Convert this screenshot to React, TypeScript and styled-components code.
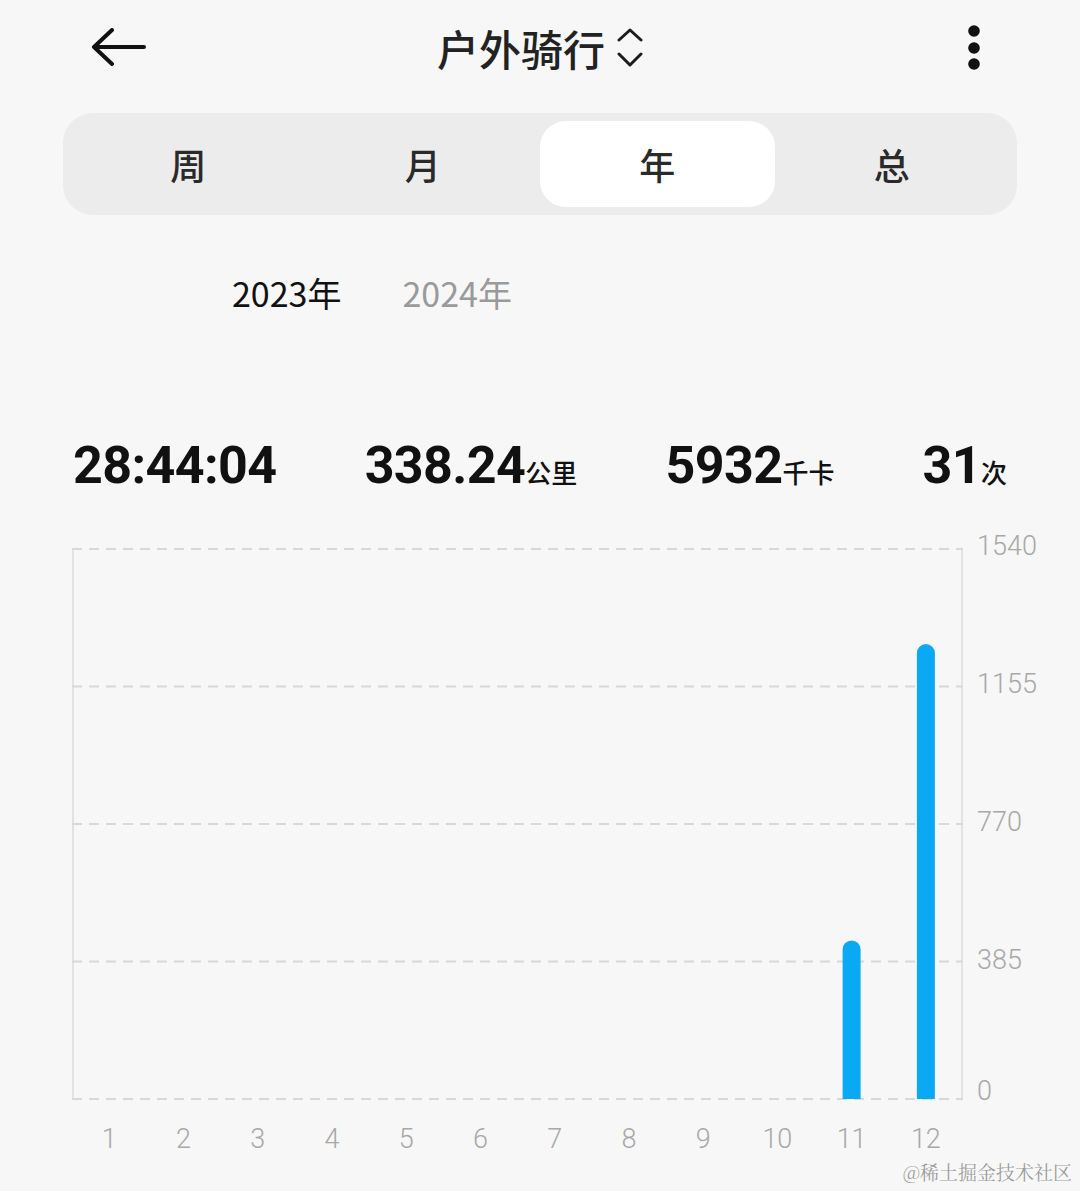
import React from "react";
import styled, { createGlobalStyle } from "styled-components";

const GlobalStyle = createGlobalStyle`
  html, body {
    margin: 0;
    padding: 0;
    background: #f7f7f7;
  }
  body {
    font-family: Roboto, "Noto Sans CJK SC", sans-serif;
  }
`;

const Page = styled.div`
  position: relative;
  width: 1080px;
  height: 1191px;
  overflow: hidden;
  background: #f7f7f7;
`;

const Header = styled.div`
  display: grid;
  grid-template-columns: 1fr auto 1fr;
  align-items: center;
  height: 96px;
`;

const BackButton = styled.div`
  display: flex;
  padding-left: 90px;
`;

const Title = styled.div`
  display: flex;
  align-items: center;
  gap: 12px;
  font-family: "Noto Sans CJK SC", sans-serif;
  font-size: 42px;
  font-weight: 500;
  color: #222222;
  line-height: 1;
`;

const MoreButton = styled.div`
  display: flex;
  justify-content: flex-end;
  padding-right: 100px;
`;

const Segmented = styled.div`
  display: grid;
  grid-template-columns: repeat(4, 1fr);
  margin: 17px 63px 0;
  height: 102px;
  padding: 8px;
  box-sizing: border-box;
  background: #ececec;
  border-radius: 30px;
`;

const Tab = styled.div<{ $active?: boolean }>`
  display: flex;
  align-items: center;
  justify-content: center;
  border-radius: 26px;
  background: ${(p) => (p.$active ? "#ffffff" : "transparent")};
  font-family: "Noto Sans CJK SC", sans-serif;
  font-size: 36px;
  font-weight: 500;
  color: #2a2a2a;
`;

const YearRow = styled.div`
  display: flex;
  gap: 61px;
  margin-top: 56px;
  padding-left: 232px;
`;

const Year = styled.div<{ $active?: boolean }>`
  font-family: "Noto Sans CJK SC", sans-serif;
  font-size: 34px;
  line-height: 44px;
  color: ${(p) => (p.$active ? "#111111" : "#9a9a9a")};
`;

const Stats = styled.div`
  display: flex;
  justify-content: space-between;
  align-items: baseline;
  margin-top: 121px;
  padding: 0 73px;
`;

const Stat = styled.div`
  display: flex;
  align-items: baseline;
`;

const StatValue = styled.span`
  font-family: Roboto, sans-serif;
  font-size: 52px;
  font-weight: 700;
  line-height: 60px;
  color: #111111;
  letter-spacing: -0.6px;
`;

const StatUnit = styled.span`
  font-family: "Noto Sans CJK SC", sans-serif;
  font-size: 26px;
  font-weight: 500;
  color: #111111;
`;

const Chart = styled.div`
  display: grid;
  grid-template-columns: 891px auto;
  margin-top: 52px;
  padding-left: 72px;
`;

const Plot = styled.svg`
  display: block;
`;

const YAxis = styled.div`
  display: flex;
  flex-direction: column;
  justify-content: space-between;
  height: 552px;
  padding-left: 14px;
`;

const YLabel = styled.div<{ $shift?: number }>`
  display: flex;
  align-items: center;
  height: 0;
  font-family: Roboto, sans-serif;
  font-size: 27px;
  font-weight: 300;
  color: #a8a8a8;
  transform: translateY(${(p) => p.$shift ?? 0}px);
`;

const XAxis = styled.div`
  display: grid;
  grid-template-columns: repeat(12, 1fr);
  margin-top: 22px;
`;

const XLabel = styled.div`
  text-align: center;
  font-family: Roboto, sans-serif;
  font-size: 27px;
  font-weight: 300;
  line-height: 34px;
  color: #a8a8a8;
`;

const Watermark = styled.div`
  position: absolute;
  right: 8px;
  bottom: 6px;
  font-family: "Noto Serif CJK SC", "Liberation Serif", serif;
  font-size: 19px;
  color: #9c9c9c;
  text-shadow: 0 0 2px #ffffff;
`;

const months = [1, 2, 3, 4, 5, 6, 7, 8, 9, 10, 11, 12];
const values = [0, 0, 0, 0, 0, 0, 0, 0, 0, 0, 444, 1274];
const ticks = [1540, 1155, 770, 385, 0];

const W = 891;
const H = 552;
const MAX = 1540;

function BarChart() {
  const col = W / 12;
  const top = 1;
  const bottom = H - 1;
  const span = bottom - top;

  return (
    <Plot width={W} height={H} viewBox={`0 0 ${W} ${H}`}>
      <line x1={1} y1={0} x2={1} y2={H} stroke="#e2e2e2" strokeWidth={2} />
      <line x1={W - 1} y1={0} x2={W - 1} y2={H} stroke="#e2e2e2" strokeWidth={2} />
      {ticks.map((t, i) => {
        const y = top + (span / 4) * i;
        return (
          <line
            key={t}
            x1={0}
            y1={y}
            x2={W}
            y2={y}
            stroke="#d8d8d8"
            strokeWidth={2}
            strokeDasharray="10 7"
          />
        );
      })}
      {values.map((v, i) => {
        if (!v) return null;
        const cx = col * (i + 0.5);
        const y = bottom - (v / MAX) * span;
        const r = 9;
        return (
          <path
            key={i}
            d={`M${cx - r},${bottom} V${y + r} A${r} ${r} 0 0 1 ${cx + r},${y + r} V${bottom} Z`}
            fill="#0aa9f4"
          />
        );
      })}
    </Plot>
  );
}

export default function App() {
  return (
    <Page>
      <GlobalStyle />
      <Header>
        <BackButton>
          <svg width="58" height="40" viewBox="0 0 58 40">
            <path
              d="M54 19H5 M22 2L4 19L22 36"
              fill="none"
              stroke="#111"
              strokeWidth="4"
              strokeLinecap="round"
              strokeLinejoin="round"
            />
          </svg>
        </BackButton>
        <Title>
          户外骑行
          <svg width="26" height="40" viewBox="0 0 26 40">
            <path
              d="M2 12L13 2L24 12 M2 26L13 37L24 26"
              fill="none"
              stroke="#1c1c1c"
              strokeWidth="3"
              strokeLinecap="round"
              strokeLinejoin="round"
            />
          </svg>
        </Title>
        <MoreButton>
          <svg width="12" height="46" viewBox="0 0 12 46">
            <circle cx="6" cy="6" r="5.8" fill="#111" />
            <circle cx="6" cy="23" r="5.8" fill="#111" />
            <circle cx="6" cy="39" r="5.8" fill="#111" />
          </svg>
        </MoreButton>
      </Header>

      <Segmented>
        <Tab>周</Tab>
        <Tab>月</Tab>
        <Tab $active>年</Tab>
        <Tab>总</Tab>
      </Segmented>

      <YearRow>
        <Year $active>2023年</Year>
        <Year>2024年</Year>
      </YearRow>

      <Stats>
        <Stat>
          <StatValue>28:44:04</StatValue>
        </Stat>
        <Stat>
          <StatValue>338.24</StatValue>
          <StatUnit>公里</StatUnit>
        </Stat>
        <Stat>
          <StatValue>5932</StatValue>
          <StatUnit>千卡</StatUnit>
        </Stat>
        <Stat>
          <StatValue>31</StatValue>
          <StatUnit>次</StatUnit>
        </Stat>
      </Stats>

      <Chart>
        <BarChart />
        <YAxis>
          {ticks.map((t) => (
            <YLabel key={t} $shift={t === 0 ? -9 : -2}>
              {t}
            </YLabel>
          ))}
        </YAxis>
        <XAxis>
          {months.map((m) => (
            <XLabel key={m}>{m}</XLabel>
          ))}
        </XAxis>
      </Chart>

      <Watermark>@稀土掘金技术社区</Watermark>
    </Page>
  );
}
